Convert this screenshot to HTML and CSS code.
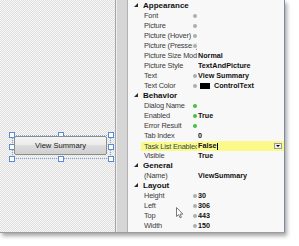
FILE: index.html
```html
<!DOCTYPE html>
<html>
<head>
<meta charset="utf-8">
<link rel="stylesheet" href="styles.css">
</head>
<body>
<div class="frame">
  <div class="designer">
    <div class="sel">
      <span class="h tl"></span><span class="h tm"></span><span class="h tr"></span>
      <span class="h ml"></span><span class="h mr"></span>
      <span class="h bl"></span><span class="h bm"></span><span class="h br"></span>
    </div>
    <div class="btn">View Summary</div>
  </div>
  <div class="splitter"></div>
  <div class="grid">
    <div class="row cat"><span class="tw"></span><span class="cname">Appearance</span></div>
    <div class="row"><span class="lbl">Font</span><span class="dot"></span><span class="val"></span></div>
    <div class="row"><span class="lbl">Picture</span><span class="dot"></span><span class="val"></span></div>
    <div class="row"><span class="lbl">Picture (Hover)</span><span class="dot"></span><span class="val"></span></div>
    <div class="row"><span class="lbl">Picture (Pressed)</span><span class="dot"></span><span class="val"></span></div>
    <div class="row"><span class="lbl">Picture Size Mode</span><span class="val">Normal</span></div>
    <div class="row"><span class="lbl">Picture Style</span><span class="val">TextAndPicture</span></div>
    <div class="row"><span class="lbl">Text</span><span class="dot"></span><span class="val">View Summary</span></div>
    <div class="row"><span class="lbl">Text Color</span><span class="dot"></span><span class="val"><span class="swatch"></span>ControlText</span></div>
    <div class="row cat"><span class="tw"></span><span class="cname">Behavior</span></div>
    <div class="row"><span class="lbl">Dialog Name</span><span class="dot green"></span><span class="val"></span></div>
    <div class="row"><span class="lbl">Enabled</span><span class="dot green"></span><span class="val">True</span></div>
    <div class="row"><span class="lbl">Error Result</span><span class="dot green"></span><span class="val"></span></div>
    <div class="row"><span class="lbl">Tab Index</span><span class="val">0</span></div>
    <div class="row active"><span class="lbl">Task List Enabled</span><span class="val edit">False<span class="caret"></span><span class="dd"><span class="arr"></span></span></span></div>
    <div class="row"><span class="lbl">Visible</span><span class="val">True</span></div>
    <div class="row cat"><span class="tw"></span><span class="cname">General</span></div>
    <div class="row"><span class="lbl">(Name)</span><span class="val">ViewSummary</span></div>
    <div class="row cat"><span class="tw"></span><span class="cname">Layout</span></div>
    <div class="row"><span class="lbl">Height</span><span class="dot"></span><span class="val">30</span></div>
    <div class="row"><span class="lbl">Left</span><span class="dot"></span><span class="val">306</span></div>
    <div class="row"><span class="lbl">Top</span><span class="dot"></span><span class="val">443</span></div>
    <div class="row"><span class="lbl">Width</span><span class="dot"></span><span class="val">150</span></div>
    <svg class="cursor" width="8" height="12" viewBox="0 0 8 12"><path d="M0.5 0.5 L0.5 9.5 L2.6 7.6 L4 10.8 L5.4 10.2 L4.1 7.1 L6.9 7.1 Z" fill="#fff" stroke="#6a6a6a" stroke-width="0.9" stroke-linejoin="round"/></svg>
  </div>
</div>
</body>
</html>
```
FILE: styles.css
```css
html, body {
  margin: 0;
  padding: 0;
  background: #ffffff;
}
body {
  width: 299px;
  height: 246px;
  overflow: hidden;
  font-family: "Liberation Sans", Arial, sans-serif;
}
.frame {
  display: flex;
  width: 285px;
  height: 233px;
  box-sizing: border-box;
  border-bottom: 1px solid #9c9c9c;
  box-shadow: 2px 3px 4px rgba(0,0,0,0.35);
}
.designer {
  position: relative;
  width: 115px;
  flex: none;
  border-right: 1px solid #a4a4a4;
  background: repeating-conic-gradient(#dedede 0 25%, #f9f9f9 0 50%) 0 0 / 2px 2px;
}
.btn {
  position: absolute;
  left: 14px;
  top: 136px;
  width: 93px;
  height: 19px;
  box-sizing: border-box;
  border: 1px solid #8c8c8c;
  border-radius: 2px;
  background: linear-gradient(#f4f4f4 0%, #ebebeb 45%, #dcdcdc 50%, #cfcfcf 100%);
  font-size: 7.6px;
  line-height: 17px;
  text-align: center;
  color: #1a1a1a;
}
.sel {
  position: absolute;
  left: 12px;
  top: 135px;
  width: 97px;
  height: 22px;
  border: 1px dotted #86a9dc;
}
.h {
  position: absolute;
  width: 4px;
  height: 4px;
  background: #fff;
  border: 1px solid #5a8ad2;
}
.tl { left: -4px; top: -4px; }
.tm { left: 45px; top: -4px; }
.tr { right: -4px; top: -4px; }
.ml { left: -4px; top: 8px; }
.mr { right: -4px; top: 8px; }
.bl { left: -4px; bottom: -4px; }
.bm { left: 45px; bottom: -4px; }
.br { right: -4px; bottom: -4px; }
.splitter {
  width: 10px;
  flex: none;
  background: #d6d6d6;
  border-left: 1px solid #f0f0f0;
  border-right: 1px solid #b0b0b0;
}
.grid {
  position: relative;
  flex: 1;
  background: #f8f8f8;
  border-right: 1px solid #7d8ca6;
  padding-top: 1px;
}
.row {
  display: grid;
  grid-template-columns: 16px 47px 7px 1fr;
  grid-template-rows: 10px;
  height: 10px;
  align-items: center;
  font-size: 7.4px;
  line-height: 10px;
  color: #3a3a3a;
  white-space: nowrap;
}
.row > span { overflow: hidden; grid-row: 1; }
.cat .tw { grid-column: 1; }
.cat .cname {
  grid-column: 2 / 5;
  font-weight: bold;
  font-size: 8px;
  color: #111;
  margin-left: -1px;
}
.tw {
  justify-self: end;
  align-self: center;
  width: 0;
  height: 0;
  margin-right: 6px;
  margin-top: -2px;
  border-left: 4px solid transparent;
  border-bottom: 4px solid #2a2a2a;
}
.lbl {
  grid-column: 2 / 4;
  height: 10px;
  margin-right: 1px;
  letter-spacing: -0.18px;
}
.dot {
  grid-column: 3;
  justify-self: center;
  width: 4px;
  height: 4px;
  border-radius: 50%;
  background: #a8b0b0;
  box-shadow: 0 0 0 1px #f8f8f8;
  z-index: 1;
}
.dot.green { background: #46c046; }
.val {
  grid-column: 4;
  font-weight: bold;
  font-size: 7.2px;
  color: #111;
  display: flex;
  align-items: center;
  height: 10px;
}
.swatch {
  display: inline-block;
  width: 10px;
  height: 6px;
  background: #000;
  margin-right: 4px;
  margin-left: 2px;
}
.active .lbl {
  background: #fbf98a;
  margin-left: -3px;
  padding-left: 3px;
  height: 9px;
  line-height: 9px;
  color: #2f4a4a;
}
.active .val {
  background: #fbf98a;
  padding-left: 1px;
  margin-left: -1px;
  height: 10px;
  position: relative;
}
.caret {
  display: inline-block;
  width: 1px;
  height: 7px;
  background: #000;
  margin-left: 1px;
}
.dd {
  position: absolute;
  right: 2px;
  top: 2px;
  width: 8px;
  height: 6px;
  box-sizing: border-box;
  border: 1px solid #9a9a9a;
  background: #f0f0f0;
}
.arr {
  position: absolute;
  left: 1px;
  top: 1px;
  width: 0;
  height: 0;
  border-left: 2px solid transparent;
  border-right: 2px solid transparent;
  border-top: 2px solid #000;
}
.cursor {
  position: absolute;
  left: 48px;
  top: 207px;
}
```
